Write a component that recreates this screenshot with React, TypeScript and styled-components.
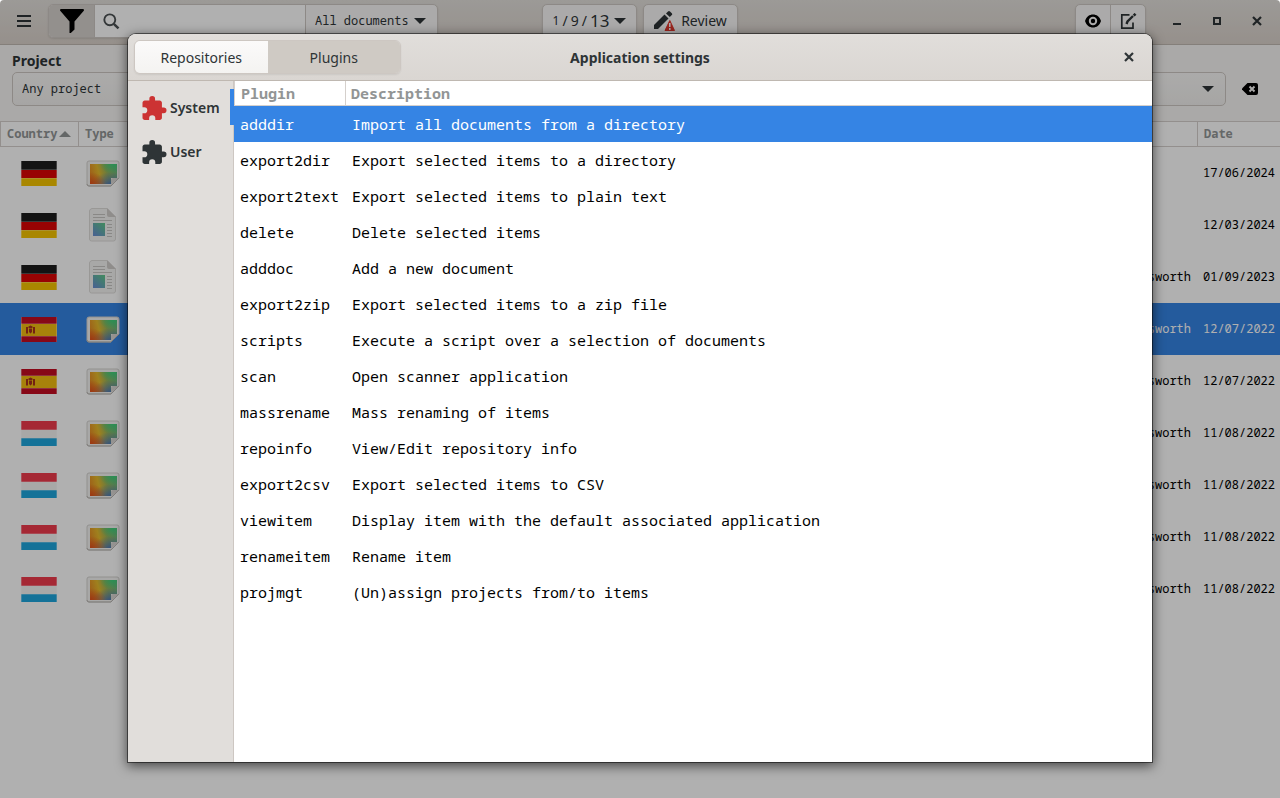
import React from "react";
import styled, { createGlobalStyle } from "styled-components";

const mono = `"Noto Sans Mono", "DejaVu Sans Mono", monospace`;
const sans = `"Noto Sans", sans-serif`;

const GlobalStyle = createGlobalStyle`
  *, *::before, *::after { box-sizing: border-box; }
  body { margin: 0; background: #ffffff; }
  button, input, select { font: inherit; color: inherit; }
  button { padding: 0; border: 0; background: none; }
  svg { display: block; flex: none; }
`;

const Window = styled.div`
  position: relative;
  min-height: 100vh;
  display: flex;
  flex-direction: column;
  overflow: hidden;
  border-radius: 4px 4px 0 0;
  background: #ffffff;
  color: #2e3436;
  font: 12px/20px ${mono};
`;

const HeaderBar = styled.header`
  display: grid;
  grid-template-columns: 1fr auto 1fr;
  align-items: center;
  height: 45px;
  padding: 0 3px 2px;
  border-bottom: 1px solid #bfb8b1;
  background: linear-gradient(#e2dfdb, #d9d1ca);
`;

const HeaderGroup = styled.div`
  display: flex;
  align-items: center;
  gap: 8px;
`;

const StartGroup = styled(HeaderGroup)`
  padding-left: 5px;
`;

const EndGroup = styled(HeaderGroup)`
  justify-content: flex-end;
  gap: 11px;
`;

const CounterGroup = styled(HeaderGroup)`
  gap: 6px;
`;

const Linked = styled.div`
  display: flex;
  height: 34px;
  overflow: hidden;
  border: 1px solid #cdc7c2;
  border-radius: 5px;
  background: #f8f7f6;
  box-shadow: 0 1px 2px rgba(0, 0, 0, 0.1);

  > * + * {
    border-left: 1px solid #cdc7c2;
  }
`;

const ToolButton = styled.button<{ $width: number; $pressed?: boolean }>`
  display: flex;
  align-items: center;
  justify-content: center;
  gap: 5px;
  width: ${(p) => p.$width}px;
  background: ${(p) => (p.$pressed ? "#d6d1cd" : "transparent")};
  font: 14px/20px ${sans};
`;

const SearchField = styled.label`
  display: flex;
  align-items: center;
  width: 211px;
  padding-left: 8px;
  background: #ffffff;

  input {
    flex: 1;
    min-width: 0;
    border: 0;
    outline: 0;
    background: none;
  }
`;

const SelectWrap = styled.div<{ $width?: string }>`
  display: flex;
  align-items: center;
  width: ${(p) => p.$width ?? "auto"};
  padding-right: 11px;

  select {
    flex: 1;
    min-width: 0;
    height: 100%;
    padding: 0 0 0 9px;
    border: 0;
    outline: 0;
    appearance: none;
    background: none;
  }
`;

const Counter = styled.span<{ $size: number }>`
  font-size: ${(p) => p.$size}px;
`;

const CounterText = styled.span`
  display: flex;
  align-items: center;
  gap: 3px;
`;

const WindowButtons = styled.div`
  display: flex;
`;

const WindowButton = styled.button`
  display: flex;
  align-items: center;
  justify-content: center;
  width: 40px;
  height: 34px;
`;

const FilterBar = styled.section`
  padding: 6px 0 15px 12px;
  background: #f6f5f4;
`;

const FilterLabel = styled.label`
  display: block;
  margin-bottom: 1px;
  font: 700 14px/20px ${sans};
`;

const FilterRow = styled.div`
  display: flex;
  height: 34px;
`;

const ProjectSelect = styled(SelectWrap)`
  flex: 1;
  border: 1px solid #cdc7c2;
  border-radius: 5px;
  background: linear-gradient(#f8f7f6, #f1f0ee);
`;

const ClearButton = styled.button`
  display: flex;
  align-items: center;
  justify-content: center;
  width: 54px;
  padding-right: 6px;
`;

const Documents = styled.table`
  width: 100%;
  border-spacing: 0;
  table-layout: fixed;

  th {
    height: 26px;
    padding: 0 0 0 6px;
    border: 1px solid #d5d0cc;
    border-right: 0;
    color: #929595;
    background: #ffffff;
    font-weight: 700;
    text-align: left;
  }

  td {
    height: 52px;
    padding: 0 6px;
    text-align: right;
    white-space: nowrap;
  }
`;

const DocumentRow = styled.tr<{ $selected: boolean }>`
  background: ${(p) => (p.$selected ? "#3584e4" : "#ffffff")};
  color: ${(p) => (p.$selected ? "#ffffff" : "#000000")};

  td svg {
    margin: 0 auto;
  }
`;

const SortLabel = styled.span`
  display: flex;
  align-items: center;
  gap: 2px;
`;

const Scrim = styled.div`
  position: absolute;
  inset: 0;
  display: flex;
  padding: 34px 10% 36px;
  background: rgba(0, 0, 0, 0.31);
`;

const Dialog = styled.section`
  flex: 1;
  display: flex;
  flex-direction: column;
  border-radius: 8px 8px 0 0;
  background: #ffffff;
  box-shadow: 0 0 0 1px rgba(0, 0, 0, 0.5), 0 3px 12px 1px rgba(0, 0, 0, 0.6);
`;

const DialogHeader = styled.header`
  display: grid;
  grid-template-columns: 1fr auto 1fr;
  align-items: center;
  height: 47px;
  padding: 0 6px;
  border-bottom: 1px solid #bfb8b1;
  border-radius: 8px 8px 0 0;
  background: linear-gradient(#e1dedb, #dad6d2);
`;

const Title = styled.h1`
  margin: 0;
  padding-top: 2px;
  font: 700 14px/20px ${sans};
`;

const Tabs = styled.div`
  display: flex;
  width: 267px;
  height: 34px;
  overflow: hidden;
  border: 1px solid #cdc7c2;
  border-radius: 6px;
  box-shadow: 0 1px 2px rgba(0, 0, 0, 0.07);
`;

const Tab = styled.button<{ $active?: boolean }>`
  flex: 1;
  padding-top: 2px;
  background: ${(p) => (p.$active ? "#cfcac4" : "linear-gradient(#fbfafa, #f4f3f1)")};
  font: 14px/20px ${sans};
`;

const CloseButton = styled(WindowButton)`
  justify-self: end;
  width: 34px;
`;

const DialogBody = styled.div`
  flex: 1;
  display: flex;
`;

const Sidebar = styled.nav`
  width: 106px;
  padding-top: 4px;
  border-right: 1px solid #cdc7c2;
  background: #e1dedb;
`;

const SidebarItem = styled.button<{ $active?: boolean }>`
  position: relative;
  display: flex;
  align-items: center;
  gap: 3px;
  width: 100%;
  height: 44px;
  padding: 2px 0 0 14px;
  font: 600 14px/20px ${sans};

  &::after {
    content: "";
    display: ${(p) => (p.$active ? "block" : "none")};
    position: absolute;
    top: 4px;
    right: -1px;
    width: 4px;
    height: 36px;
    background: #3584e4;
  }
`;

const PluginPane = styled.div`
  flex: 1;
`;

const Plugins = styled.table`
  width: 100%;
  border-spacing: 0;
  table-layout: fixed;
  font: 15px/20px ${mono};

  th {
    height: 25px;
    padding: 0 0 0 5px;
    border-bottom: 1px solid #d5d0cc;
    color: #929595;
    font-weight: 700;
    text-align: left;
  }

  th:first-child {
    padding-left: 6px;
    border-left: 1px solid #d5d0cc;
    border-right: 1px solid #d5d0cc;
  }

  td {
    height: 36px;
    padding: 0 0 0 6px;
    white-space: nowrap;
  }
`;

const PluginRow = styled.tr<{ $selected: boolean }>`
  background: ${(p) => (p.$selected ? "#3584e4" : "transparent")};
  color: ${(p) => (p.$selected ? "#ffffff" : "#000000")};
`;

const ArrowDown = () => (
  <svg width="12" height="6" viewBox="0 0 12 6">
    <path d="M0 0h12L6 6z" fill="#2e3436" />
  </svg>
);

const CrossIcon = () => (
  <svg width="10" height="10" viewBox="0 0 10 10">
    <path d="M1 1l8 8M9 1L1 9" stroke="#2e3436" strokeWidth="2.2" />
  </svg>
);

const PuzzleIcon = ({ color }: { color: string }) => (
  <svg width="25" height="24" viewBox="2 1 21 21">
    <path
      fill={color}
      d="M20.5 11H19V7c0-1.1-.9-2-2-2h-4V3.5a2.5 2.5 0 0 0-5 0V5H4c-1.1 0-2 .9-2 2v3.8h1.5a2.7 2.7 0 0 1 0 5.4H2V20c0 1.1.9 2 2 2h3.8v-1.5a2.7 2.7 0 0 1 5.4 0V22H17c1.1 0 2-.9 2-2v-4h1.5a2.5 2.5 0 0 0 0-5z"
    />
  </svg>
);

const SearchIcon = () => (
  <svg width="17" height="17" viewBox="0 0 18 18" fill="none" stroke="#4c5153" strokeWidth="2">
    <circle cx="7.2" cy="7.2" r="5.8" />
    <path d="M11.4 11.4l5 5" strokeWidth="2.6" />
  </svg>
);

const FunnelIcon = () => (
  <svg width="24" height="24" viewBox="0 0 24 24">
    <path d="M1 0h22q1 0 1 1.4L14.5 12.500V20.500L10.800 24H9.500V12.500L0 1.400Q0 0 1 0z" fill="#000" />
  </svg>
);

const ReviewIcon = () => (
  <svg width="22" height="21" viewBox="0 0 22 21">
    <path d="M0 18v-4L10.500 3.500l4 4L4 18z" fill="#2e3436" />
    <path d="M12 2.500L14 .5q1-.8 2 0L17.800 2.300q.8 1 0 1.800l-2 2z" fill="#2e3436" />
    <path d="M15.800 9.500L20.500 19.500H11z" fill="#e0362c" stroke="#e0362c" strokeLinejoin="round" />
    <path d="M15.800 12v4M15.800 17v2" stroke="#fff" strokeWidth="1.500" />
  </svg>
);

const EyeIcon = () => (
  <svg width="16" height="14" viewBox="0 0 16 14">
    <path d="M0 7C1.500 2.500 4.500.5 8 .5s6.500 2 8 6.500c-1.500 4.500-4.500 6.500-8 6.500S1.500 11.500 0 7z" fill="#000" />
    <circle cx="8" cy="7" r="3.200" fill="#000" stroke="#f8f7f6" strokeWidth="2" />
  </svg>
);

const EditIcon = () => (
  <svg width="17" height="17" viewBox="0 0 17 17" fill="none" stroke="#2e3436">
    <path d="M9.500 1.800H1.800v13.400H13V9.500" strokeWidth="1.700" />
    <path d="M6.500 11l1-2.500L13 3" strokeWidth="2.400" />
    <path d="M13.700 2.600L15.500.8" strokeWidth="2.600" />
  </svg>
);

const MenuIcon = () => (
  <svg width="14" height="12" viewBox="0 0 14 12">
    <path d="M0 1h14M0 6h14M0 11h14" stroke="#2e3436" strokeWidth="2" />
  </svg>
);

const BackspaceIcon = () => (
  <svg width="16" height="12" viewBox="0 0 16 12">
    <path d="M5.500 0H14q2 0 2 2v8q0 2-2 2H5.500L0 6.500v-1z" fill="#000" />
    <path d="M7.500 3.500l5 5M12.500 3.500l-5 5" stroke="#f6f5f4" strokeWidth="2" />
  </svg>
);

type Country = "de" | "es" | "lu";

const stripes: Record<Country, [string, string, string]> = {
  de: ["#1c1c1c", "#dd0505", "#f5c400"],
  es: ["#c40d22", "#f2bd10", "#c40d22"],
  lu: ["#ef3a4c", "#f4f4f2", "#1da6dc"],
};

const Flag = ({ country }: { country: Country }) => {
  const [top, middle, bottom] = stripes[country];
  const upper = country === "es" ? 7 : 9;
  const lower = country === "es" ? 19 : 17;
  return (
    <svg width="36" height="25" viewBox="0 0 36 25">
      <rect width="36" height="25" fill={middle} />
      <rect width="36" height={upper} fill={top} />
      <rect y={lower} width="36" height="8" fill={bottom} />
      <path d={`M0 ${upper - 0.5}h36M0 ${lower + 0.5}h36`} stroke="#fff" strokeOpacity=".25" />
      {country === "es" && (
        <g fill="#a8321c">
          <path d="M5 10h2v6.500H5zM12 10h2v6.500h-2z" />
          <path d="M7.500 9.500L9.500 8.500l2 1v1.500H7.500zM8 11.500h3V15l-1.500 1.500L8 15z" />
        </g>
      )}
      <path d="M.5 0v25M35.500 0v25" stroke="#fff" strokeOpacity=".3" />
    </svg>
  );
};

const ImageIcon = ({ id }: { id: string }) => (
  <svg width="34" height="27" viewBox="0 0 34 27">
    <defs>
      <linearGradient id={`${id}-base`} x1="0" y1=".6" x2="1" y2=".4">
        <stop offset="0" stopColor="#e58a24" />
        <stop offset=".35" stopColor="#e6bb2c" />
        <stop offset=".65" stopColor="#98b35a" />
        <stop offset="1" stopColor="#72b47c" />
      </linearGradient>
      <radialGradient id={`${id}-green`} cx=".85" cy="0" r=".5">
        <stop offset="0" stopColor="#3fd07a" />
        <stop offset="1" stopColor="#3fd07a" stopOpacity="0" />
      </radialGradient>
      <radialGradient id={`${id}-blue`} cx=".75" cy="1.100" r=".7">
        <stop offset="0" stopColor="#4470c0" />
        <stop offset="1" stopColor="#4470c0" stopOpacity="0" />
      </radialGradient>
      <radialGradient id={`${id}-red`} cx="0" cy="1" r=".6">
        <stop offset="0" stopColor="#e2501c" />
        <stop offset="1" stopColor="#e2501c" stopOpacity="0" />
      </radialGradient>
    </defs>
    <path d="M3 1h28q2 0 2 2v15l-8 8H3q-2 0-2-2V3q0-2 2-2z" fill="#f4f3f2" stroke="#d4d2cf" />
    <path d="M1 24q0 2 2 2h22l8-8" fill="none" stroke="#b9b5b2" />
    {["base", "green", "blue", "red"].map((layer) => (
      <path key={layer} d="M4 4h27v14h-6v6H4z" fill={`url(#${id}-${layer})`} />
    ))}
    <path d="M25 25v-5q0-2 2-2h6z" fill="#d8d5d2" />
  </svg>
);

const PageIcon = ({ id }: { id: string }) => (
  <svg width="27" height="34" viewBox="0 0 27 34">
    <defs>
      <linearGradient id={id} x1="1" y1="0" x2="0.2" y2="1">
        <stop offset="0" stopColor="#5fca88" />
        <stop offset="1" stopColor="#6890d0" />
      </linearGradient>
    </defs>
    <path d="M2.500.5H18l8.500 8.500v22q0 2-2 2h-22q-2 0-2-2v-28q0-2 2-2z" fill="#f4f3f2" stroke="#dedcda" />
    <path d="M18 0v7q0 2 2 2h7z" fill="#d0cdca" />
    <path
      d="M4 6.500h12M4 9.500h12M4 12.500h19M18 16.500h5M18 19.500h5M18 22.500h5M18 25.500h5M18 28.500h5"
      stroke="#c7c5c3"
    />
    <path d="M4 15h12v13H4z" fill={`url(#${id})`} />
  </svg>
);

const documents: { country: Country; kind: "image" | "page"; owner: string; date: string }[] = [
  { country: "de", kind: "image", owner: "", date: "17/06/2024" },
  { country: "de", kind: "page", owner: "", date: "12/03/2024" },
  { country: "de", kind: "page", owner: "sworth", date: "01/09/2023" },
  { country: "es", kind: "image", owner: "sworth", date: "12/07/2022" },
  { country: "es", kind: "image", owner: "sworth", date: "12/07/2022" },
  { country: "lu", kind: "image", owner: "sworth", date: "11/08/2022" },
  { country: "lu", kind: "image", owner: "sworth", date: "11/08/2022" },
  { country: "lu", kind: "image", owner: "sworth", date: "11/08/2022" },
  { country: "lu", kind: "image", owner: "sworth", date: "11/08/2022" },
];

const plugins = [
  ["adddir", "Import all documents from a directory"],
  ["export2dir", "Export selected items to a directory"],
  ["export2text", "Export selected items to plain text"],
  ["delete", "Delete selected items"],
  ["adddoc", "Add a new document"],
  ["export2zip", "Export selected items to a zip file"],
  ["scripts", "Execute a script over a selection of documents"],
  ["scan", "Open scanner application"],
  ["massrename", "Mass renaming of items"],
  ["repoinfo", "View/Edit repository info"],
  ["export2csv", "Export selected items to CSV"],
  ["viewitem", "Display item with the default associated application"],
  ["renameitem", "Rename item"],
  ["projmgt", "(Un)assign projects from/to items"],
];

export default function App() {
  return (
    <Window>
      <GlobalStyle />
      <HeaderBar>
        <StartGroup>
          <ToolButton $width={32} aria-label="Menu">
            <MenuIcon />
          </ToolButton>
          <Linked>
            <ToolButton $width={45} $pressed aria-label="Filter">
              <FunnelIcon />
            </ToolButton>
            <SearchField>
              <SearchIcon />
              <input type="text" aria-label="Search" />
            </SearchField>
            <SelectWrap $width="132px">
              <select aria-label="Documents shown">
                <option>All documents</option>
              </select>
              <ArrowDown />
            </SelectWrap>
          </Linked>
        </StartGroup>
        <CounterGroup>
          <Linked>
            <ToolButton $width={93} aria-label="Document count">
              <CounterText>
                <Counter $size={12}>1</Counter>
                <Counter $size={14}>/</Counter>
                <Counter $size={14}>9</Counter>
                <Counter $size={14}>/</Counter>
                <Counter $size={17}>13</Counter>
              </CounterText>
              <ArrowDown />
            </ToolButton>
          </Linked>
          <Linked>
            <ToolButton $width={93}>
              <ReviewIcon />
              Review
            </ToolButton>
          </Linked>
        </CounterGroup>
        <EndGroup>
          <Linked>
            <ToolButton $width={34} aria-label="View">
              <EyeIcon />
            </ToolButton>
            <ToolButton $width={35} aria-label="Edit">
              <EditIcon />
            </ToolButton>
          </Linked>
          <WindowButtons>
            <WindowButton aria-label="Minimize">
              <svg width="8" height="8" viewBox="0 0 8 8">
                <path d="M0 7h8" stroke="#2e3436" strokeWidth="2" />
              </svg>
            </WindowButton>
            <WindowButton aria-label="Maximize">
              <svg width="8" height="8" viewBox="0 0 8 8">
                <path d="M1 1h6v6H1z" fill="none" stroke="#2e3436" strokeWidth="2" />
              </svg>
            </WindowButton>
            <WindowButton aria-label="Close window">
              <CrossIcon />
            </WindowButton>
          </WindowButtons>
        </EndGroup>
      </HeaderBar>

      <FilterBar>
        <FilterLabel htmlFor="project">Project</FilterLabel>
        <FilterRow>
          <ProjectSelect>
            <select id="project">
              <option>Any project</option>
            </select>
            <ArrowDown />
          </ProjectSelect>
          <ClearButton aria-label="Clear project">
            <BackspaceIcon />
          </ClearButton>
        </FilterRow>
      </FilterBar>

      <Documents>
        <colgroup>
          <col width="78" />
          <col width="49" />
          <col />
          <col width="83" />
        </colgroup>
        <thead>
          <tr>
            <th>
              <SortLabel>
                Country
                <svg width="12" height="6" viewBox="0 0 12 6">
                  <path d="M0 6h12L6 0z" fill="#929595" />
                </svg>
              </SortLabel>
            </th>
            <th>Type</th>
            <th />
            <th>Date</th>
          </tr>
        </thead>
        <tbody>
          {documents.map((doc, i) => (
            <DocumentRow key={i} $selected={i === 3}>
              <td>
                <Flag country={doc.country} />
              </td>
              <td>{doc.kind === "image" ? <ImageIcon id={`image${i}`} /> : <PageIcon id={`page${i}`} />}</td>
              <td>{doc.owner}</td>
              <td>{doc.date}</td>
            </DocumentRow>
          ))}
        </tbody>
      </Documents>

      <Scrim>
        <Dialog role="dialog" aria-labelledby="settings-title">
          <DialogHeader>
            <Tabs role="tablist">
              <Tab role="tab">Repositories</Tab>
              <Tab role="tab" $active aria-selected>
                Plugins
              </Tab>
            </Tabs>
            <Title id="settings-title">Application settings</Title>
            <CloseButton aria-label="Close">
              <CrossIcon />
            </CloseButton>
          </DialogHeader>
          <DialogBody>
            <Sidebar>
              <SidebarItem $active>
                <PuzzleIcon color="#cc3333" />
                System
              </SidebarItem>
              <SidebarItem>
                <PuzzleIcon color="#2e3436" />
                User
              </SidebarItem>
            </Sidebar>
            <PluginPane>
              <Plugins>
                <colgroup>
                  <col width="112" />
                  <col />
                </colgroup>
                <thead>
                  <tr>
                    <th>Plugin</th>
                    <th>Description</th>
                  </tr>
                </thead>
                <tbody>
                  {plugins.map(([name, description], i) => (
                    <PluginRow key={name} $selected={i === 0}>
                      <td>{name}</td>
                      <td>{description}</td>
                    </PluginRow>
                  ))}
                </tbody>
              </Plugins>
            </PluginPane>
          </DialogBody>
        </Dialog>
      </Scrim>
    </Window>
  );
}
